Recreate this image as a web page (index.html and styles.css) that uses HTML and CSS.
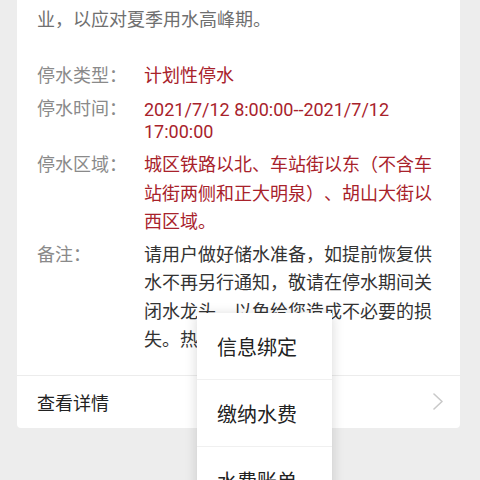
FILE: index.html
```html
<!DOCTYPE html>
<html lang="zh-CN">
<head>
<meta charset="utf-8">
<title>停水通知</title>
<link rel="stylesheet" href="styles.css">
</head>
<body>
<div class="page">
  <div class="card">
    <p class="intro">为保障夏季供水安全，我司将对主管网进行改造作业，以应对夏季用水高峰期。</p>
    <div class="info">
      <div class="row">
        <span class="label">停水类型：</span>
        <span class="value red">计划性停水</span>
      </div>
      <div class="row">
        <span class="label">停水时间：</span>
        <span class="value red date">2021/7/12 8:00:00--2021/7/12 17:00:00</span>
      </div>
      <div class="row">
        <span class="label">停水区域：</span>
        <span class="value red">城区铁路以北、车站街以东（不含车站街两侧和正大明泉）、胡山大街以西区域。</span>
      </div>
      <div class="row">
        <span class="label">备注：</span>
        <span class="value">请用户做好储水准备，如提前恢复供水不再另行通知，敬请在停水期间关闭水龙头，以免给您造成不必要的损失。热线：96069</span>
      </div>
    </div>
    <div class="detail">
      <span class="detail-text">查看详情</span>
      <svg class="chevron" width="10" height="17" viewBox="0 0 10 17"><polyline points="1,1 9,8.5 1,16" fill="none" stroke="#c9c9c9" stroke-width="1.6" stroke-linejoin="round" stroke-linecap="round"/></svg>
    </div>
  </div>
  <div class="menu">
    <div class="menu-item">信息绑定</div>
    <div class="menu-item">缴纳水费</div>
    <div class="menu-item">水费账单</div>
  </div>
</div>
</body>
</html>
```
FILE: styles.css
```css
html, body {
  margin: 0;
  padding: 0;
  background: #ededed;
  height: 100%;
  overflow: hidden;
}
.page {
  position: relative;
  height: 480px;
  overflow: hidden;
  font-family: Roboto, "Noto Sans CJK SC", sans-serif;
  font-size: 18px;
  text-spacing-trim: space-all;
}
.card {
  margin: -30px 20px 0 17px;
  background: #fff;
  border-radius: 0 0 4px 4px;
}
.intro {
  margin: 0;
  padding: 5px 20px 0 20px;
  line-height: 30px;
  color: #6f6f6f;
}
.info {
  padding: 27.25px 20px 20px 20px;
  display: flex;
  flex-direction: column;
  gap: 4px;
}
.row {
  display: flex;
  align-items: flex-start;
  line-height: 28.5px;
}
.label {
  flex: 0 0 107px;
  color: #8a8a8a;
}
.value {
  flex: 1;
  color: #333;
}
.red {
  color: #a8222b;
}
.date {
  line-height: 22.5px;
  padding: 4px 0 3.5px 0;
}
.detail {
  border-top: 1px solid #ececec;
  height: 52px;
  padding: 0 17px 0 20px;
  display: flex;
  align-items: center;
  justify-content: space-between;
  color: #222;
}
.chevron {
  display: block;
}
.menu {
  position: absolute;
  left: 197px;
  top: 313px;
  width: 135px;
  background: #fff;
  box-shadow: 0 2px 12px rgba(0, 0, 0, 0.16);
}
.menu-item {
  height: 66px;
  display: flex;
  align-items: center;
  padding-left: 20px;
  font-size: 20px;
  color: #222;
  border-bottom: 1.5px solid #f0f0f0;
}
```
